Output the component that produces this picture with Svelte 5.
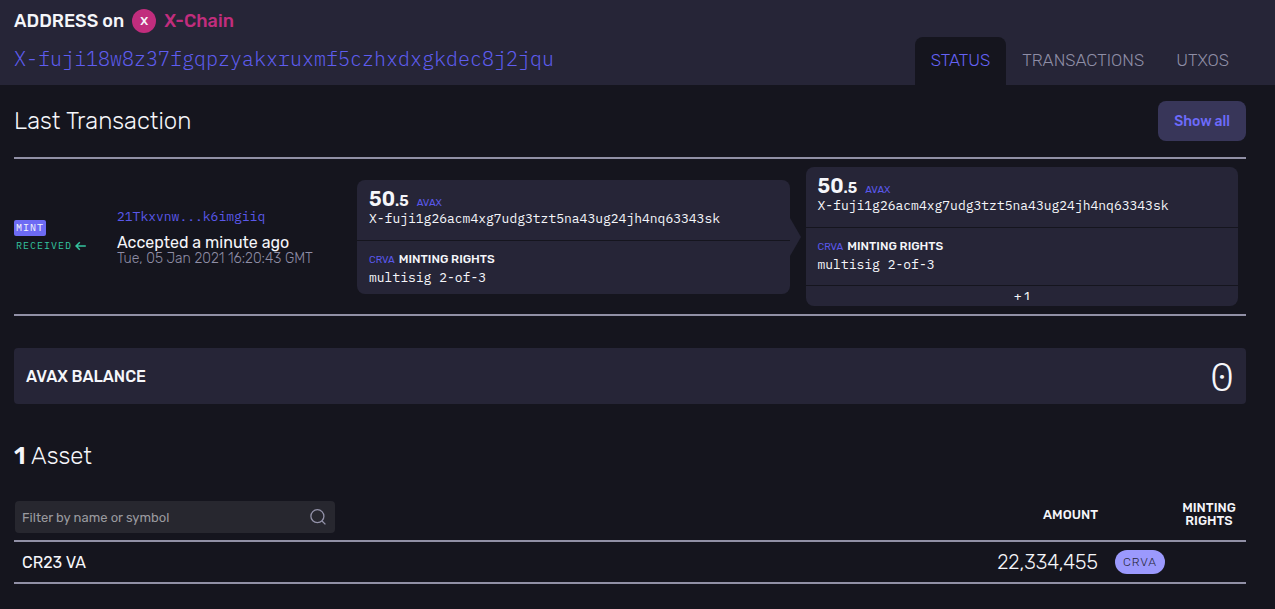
<script>
  const address = 'X-fuji18w8z37fgqpzyakxruxmf5czhxdxgkdec8j2jqu';
  const tabs = ['Status', 'Transactions', 'UTXOs'];
  const owner = 'X-fuji1g26acm4xg7udg3tzt5na43ug24jh4nq63343sk';
  const assets = [{ name: 'CR23 VA', amount: '22,334,455', symbol: 'CRVA' }];
  let active = $state('Status');
  let filter = $state('');
  const shown = $derived(
    assets.filter((a) => (a.name + a.symbol).toLowerCase().includes(filter.toLowerCase()))
  );
</script>

{#snippet utxos(more)}
  <section>
    <p class="amount"><b>50<small>.5</small></b> <a href="#avax">AVAX</a></p>
    <p class="owner">{owner}</p>
  </section>
  <section class="rights">
    <p class="amount"><a href="#crva">CRVA</a> <strong>MINTING RIGHTS</strong></p>
    <p class="owner">multisig 2-of-3</p>
  </section>
  {#if more}
    <footer>+ {more}</footer>
  {/if}
{/snippet}

<header>
  <div class="meta">
    <h1>ADDRESS on <span class="chain-dot">X</span> <span class="chain">X-Chain</span></h1>
    <p class="address">{address}</p>
  </div>
  <nav>
    {#each tabs as tab}
      <button class="tab" class:active={tab === active} onclick={() => (active = tab)}>{tab}</button>
    {/each}
  </nav>
</header>

<main>
  <div class="title-row">
    <h2>Last Transaction</h2>
    <button class="show-all">Show all</button>
  </div>

  <article class="tx">
    <div class="type">
      <span class="mint">MINT</span>
      <span class="received">RECEIVED
        <svg width="11" height="10" viewBox="0 0 11 10" fill="none" stroke="currentColor" stroke-width="1.5"><path d="M10.8 5H1.2M4.8 1.2 1 5l3.8 3.8" /></svg>
      </span>
    </div>
    <div class="info">
      <a href="#tx">21Tkxvnw...k6imgiiq</a>
      <p class="accepted">Accepted a minute ago</p>
      <p class="date">Tue, 05 Jan 2021 16:20:43 GMT</p>
    </div>
    <div class="cards">
      <div class="card input">{@render utxos(0)}</div>
      <div class="card">{@render utxos(1)}</div>
    </div>
  </article>

  <div class="balance">
    <h3>AVAX BALANCE</h3>
    <span>0</span>
  </div>

  <h2 class="assets"><b>1</b> Asset</h2>

  <table>
    <thead>
      <tr>
        <th class="name">
          <label class="filter">
            <input type="text" aria-label="Filter by name or symbol" placeholder="Filter by name or symbol" bind:value={filter} />
            <svg width="18" height="18" viewBox="0 0 18 18" fill="none" stroke="#9392a9" stroke-width="1.3"><circle cx="8.4" cy="8.2" r="6.5" /><path d="m13 13 3.4 3.4" /></svg>
          </label>
        </th>
        <th class="num">AMOUNT</th>
        <th class="symbol"></th>
        <th class="minting">MINTING RIGHTS</th>
      </tr>
    </thead>
    <tbody>
      {#each shown as asset}
        <tr>
          <td class="name">{asset.name}</td>
          <td class="num">{asset.amount}</td>
          <td class="symbol"><span class="pill">{asset.symbol}</span></td>
          <td class="minting"></td>
        </tr>
      {/each}
    </tbody>
  </table>
</main>

<style>
  :global(body) {
    margin: 0;
    background: #15151e;
    color: #f5f6fa;
    font-family: Rubik, Inter, Roboto, sans-serif;
    font-size: 16px;
  }
  h1, h2, h3, p { margin: 0; }
  a { color: #5a58ea; text-decoration: none; }
  button { border: 0; font-family: inherit; cursor: pointer; }

  header {
    display: flex;
    justify-content: space-between;
    align-items: flex-end;
    padding: 0 30px 0 14px;
    background: #262537;
  }
  .meta { align-self: flex-start; padding: 8px 0 13px; }
  h1 {
    display: flex;
    align-items: center;
    gap: 8px;
    font-size: 18px;
    line-height: 26px;
    font-weight: 500;
  }
  .chain { color: #c12d7d; }
  .chain-dot {
    width: 24px;
    height: 24px;
    border-radius: 50%;
    background: #c12d7d;
    font-size: 12px;
    line-height: 24px;
    text-align: center;
  }
  .address {
    margin-top: 12px;
    color: #5f5df0;
    font-family: "IBM Plex Mono", "Liberation Mono", monospace;
    font-size: 20px;
    line-height: 26px;
    font-weight: 300;
  }
  nav { display: flex; }
  .tab {
    height: 48px;
    padding: 0 16px 2px;
    border-radius: 8px 8px 0 0;
    background: none;
    color: #8f8ea6;
    font-size: 17px;
    font-weight: 300;
    text-transform: uppercase;
  }
  .tab.active { background: #15151e; color: #6562f5; }

  main { padding: 16px 29px 0 14px; }
  .title-row {
    display: flex;
    justify-content: space-between;
    align-items: center;
    padding-bottom: 16px;
  }
  h2 { font-size: 24px; line-height: 32px; font-weight: 300; }
  .show-all {
    height: 40px;
    padding: 0 16px;
    border-radius: 8px;
    background: #383659;
    color: #6d6bfb;
    font-size: 14px;
    font-weight: 500;
  }

  .tx {
    display: grid;
    grid-template-columns: 103px 240px minmax(0, 1fr);
    align-items: center;
    padding: 8px 8px 8px 0;
    border: solid #9190a6;
    border-width: 2px 0;
  }
  .type {
    display: flex;
    flex-direction: column;
    align-items: flex-start;
    gap: 2px;
    font-family: "IBM Plex Mono", "Liberation Mono", monospace;
    font-size: 10px;
    line-height: 16px;
    letter-spacing: 1px;
  }
  .mint { padding: 0 2px; border-radius: 2px; background: #6d6bf4; }
  .received {
    display: flex;
    align-items: center;
    gap: 3px;
    padding-left: 2px;
    color: #34c5a0;
  }
  .info a, .owner {
    display: block;
    font-family: "IBM Plex Mono", "Liberation Mono", monospace;
    font-size: 13px;
    line-height: 18px;
  }
  .accepted { margin-top: 8px; line-height: 18px; }
  .date { color: #8f8ea6; font-size: 14px; line-height: 14px; font-weight: 300; }

  .cards {
    display: grid;
    grid-template-columns: minmax(0, 1fr) minmax(0, 1fr);
    align-items: center;
    gap: 16px;
  }
  .card {
    position: relative;
    border-radius: 8px;
    background: #262537;
  }
  .card.input::after {
    content: "";
    position: absolute;
    left: 100%;
    top: 50%;
    border: solid transparent;
    border-width: 19px 0 19px 11px;
    border-left-color: #262537;
    transform: translateY(-50%);
  }
  section { padding: 8px 12px 12px; }
  .rights { padding-bottom: 11px; border-top: 1px solid #15151e; }
  .input .rights { padding-bottom: 7px; }
  .amount { display: flex; align-items: baseline; gap: 8px; height: 22px; line-height: 22px; }
  .rights .amount { gap: 4px; height: 20px; line-height: 20px; }
  .amount b { font-size: 20px; font-weight: 600; }
  .amount small { font-size: 15px; }
  .amount a { font-size: 10px; }
  .amount strong { font-size: 12px; font-weight: 500; }
  footer {
    border-top: 1px solid #15151e;
    font-size: 12px;
    line-height: 20px;
    text-align: center;
  }

  .balance {
    display: flex;
    justify-content: space-between;
    align-items: center;
    height: 56px;
    margin: 32px 0 36px;
    padding: 0 12px;
    border-radius: 4px;
    background: #262537;
  }
  h3 { font-size: 16px; font-weight: 500; }
  .balance span {
    font-family: "IBM Plex Mono", "Liberation Mono", monospace;
    font-size: 40px;
    font-weight: 300;
  }
  .assets b { font-weight: 600; }

  table { width: 100%; margin-top: 24px; border-collapse: collapse; }
  tr { border-bottom: 2px solid #9190a6; }
  th {
    height: 36px;
    padding: 0 0 8px;
    font-size: 13px;
    line-height: 13px;
    font-weight: 500;
  }
  th.name { padding-bottom: 2px; }
  td { height: 40px; padding: 0; }
  td.name { padding-left: 8px; }
  .num { width: 130px; text-align: right; }
  td.num { font-size: 20px; font-weight: 300; }
  .symbol { width: 74px; }
  .pill {
    display: block;
    width: 50px;
    margin-left: 17px;
    border-radius: 12px;
    background: #9b99fd;
    color: #262537;
    font-size: 12px;
    line-height: 24px;
    font-weight: 300;
    letter-spacing: 1px;
    text-align: center;
  }
  .minting { width: 74px; text-align: center; }
  .filter {
    display: flex;
    align-items: center;
    width: 320px;
    height: 32px;
    margin-left: 1px;
    padding: 0 8px 0 7px;
    box-sizing: border-box;
    border-radius: 4px;
    background: #27272f;
  }
  .filter input {
    flex: 1;
    min-width: 0;
    padding: 0;
    border: 0;
    outline: 0;
    background: none;
    color: #f5f6fa;
    font-family: inherit;
    font-size: 13px;
  }
  .filter input::placeholder { color: #9a9a9f; }
</style>
